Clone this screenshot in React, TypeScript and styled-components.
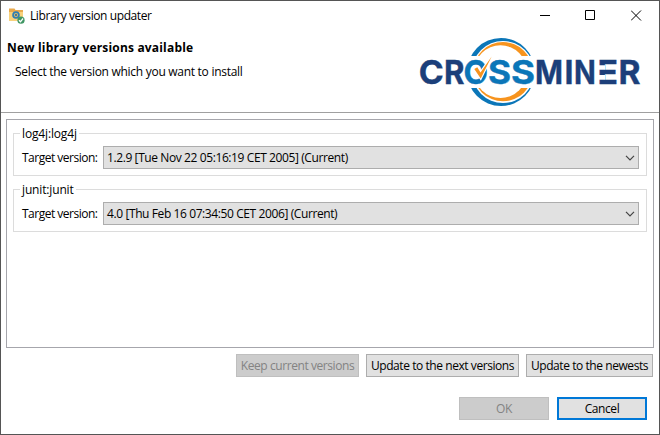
import React from "react";
import styled, { createGlobalStyle } from "styled-components";

const Global = createGlobalStyle`
  *{box-sizing:border-box}
  body{margin:0;background:#fff}
`;

const Window = styled.div`
  width: 660px;
  height: 435px;
  display: flex;
  flex-direction: column;
  border: 1px solid #555;
  background: #fff;
  color: #000;
  font: 12px/16px "Open Sans", "Noto Sans", sans-serif;
  letter-spacing: -0.3px;
  white-space: nowrap;
`;

const TitleBar = styled.div`
  height: 30px;
  display: flex;
  align-items: center;
  padding-left: 7px;
`;

const Title = styled.span`
  flex: 1;
  margin-left: 5px;
  letter-spacing: -0.41px;
`;

const WindowButton = styled.span`
  width: 45px;
  height: 30px;
  display: flex;
  align-items: center;
  justify-content: center;
`;

const Header = styled.header`
  height: 82px;
  display: flex;
  justify-content: space-between;
  border-bottom: 1px solid #a0a0a0;
`;

const Heading = styled.h1`
  margin: 9px 0 0 6px;
  font-size: 12px;
  line-height: 16px;
  font-weight: 700;
  letter-spacing: 0.18px;
`;

const Subtitle = styled.p`
  margin: 8px 0 0 14px;
  letter-spacing: -0.28px;
`;

const LogoArt = styled.svg`
  flex: none;
  margin-top: 3px;
`;

const Panel = styled.main`
  width: 648px;
  height: 229px;
  margin: 6px 0 0 5px;
  padding: 6px;
  border: 1px solid #a6a6ac;
`;

const Group = styled.fieldset`
  height: 50px;
  min-width: 0;
  margin: 0 0 6px;
  padding: 5px 7px 0 8px;
  border: 1px solid #dcdcdc;
`;

const Legend = styled.legend`
  margin-left: -2px;
  padding: 0 2px;
  height: 15px;
  letter-spacing: -0.15px;
`;

const Field = styled.div`
  display: flex;
`;

const Label = styled.label`
  width: 81px;
  line-height: 23px;
  letter-spacing: -0.5px;
`;

const Combo = styled.div`
  flex: 1;
  height: 23px;
  display: flex;
  align-items: center;
  justify-content: space-between;
  padding: 0 3px;
  border: 1px solid #adadad;
  background: #e1e1e1;
  letter-spacing: -0.4px;
`;

const Actions = styled.div`
  display: flex;
  justify-content: flex-end;
  gap: 7px;
  margin: 6px 6px 0 0;
`;

const DialogButtons = styled(Actions)`
  gap: 8px;
  margin: 20px 12px 0 0;
`;

const Button = styled.button<{ $width: number; $primary?: boolean }>`
  width: ${(p) => p.$width}px;
  height: 23px;
  padding: 0;
  font: inherit;
  letter-spacing: -0.43px;
  color: #000;
  background: #e1e1e1;
  border: ${(p) => (p.$primary ? "2px solid #0078d7" : "1px solid #adadad")};
  &:disabled {
    color: #838383;
    background: #ccc;
    border-color: #bfbfbf;
  }
`;

const AppIcon = () => (
  <svg width="17" height="17" viewBox="0 0 17 17">
    <path d="M1 .5h5.500l1 1.500H15v11H1z" fill="#e9a94c" />
    <path d="M1 4h14v9H1z" fill="#f8d27c" />
    <circle cx="8" cy="7" r="3.800" fill="#2f7fb5" />
    <circle cx="8" cy="7" r="2" fill="#d9c070" />
    <circle cx="8" cy="7" r="1" fill="#245f95" />
    <circle cx="13" cy="12.200" r="3.600" fill="#3f9663" />
    <path d="M11 12.200l1.500 1.600 2.500-3.300" fill="none" stroke="#fff" strokeWidth="1.300" />
  </svg>
);

const NAVY = "#1c3f7a";
const BLUE = "#0b76b8";
const ORANGE = "#f7941e";

const Glyph = ({ c, x, w, fill }: { c: string; x: number; w: number; fill: string }) => (
  <text
    x={x}
    y="84.4"
    textLength={w}
    lengthAdjust="spacingAndGlyphs"
    fill={fill}
    stroke={fill}
    strokeWidth="0.4"
    fontFamily="Inter"
    fontWeight="700"
    fontSize="33"
    letterSpacing="0"
  >
    {c}
  </text>
);

const Logo = () => (
  <LogoArt width="244" height="76" viewBox="415 34 244 76">
    <circle cx="501" cy="72" r="34" fill={BLUE} />
    <circle cx="503" cy="72" r="31" fill="#fff" />
    <circle cx="503" cy="71.7" r="29.6" fill={ORANGE} />
    <circle cx="500.5" cy="71.7" r="26.400" fill="#fff" />
    <path d="M460 56h80v32h-80z" fill="#fff" />
    <Glyph c="C" x={418.7} w={25} fill={NAVY} />
    <Glyph c="R" x={444} w={20.500} fill={NAVY} />
    <Glyph c="O" x={463.6} w={24.500} fill={BLUE} />
    <Glyph c="S" x={488} w={23} fill={BLUE} />
    <Glyph c="S" x={511} w={24} fill={BLUE} />
    <Glyph c="M" x={535} w={28} fill={NAVY} />
    <Glyph c="I" x={564.6} w={9} fill={NAVY} />
    <Glyph c="N" x={574} w={21.800} fill={NAVY} />
    <Glyph c="E" x={597.5} w={20.500} fill={NAVY} />
    <path d="M597.500 65.200h7.500v4.600h-7.500zM597.500 75h7.500v4.700h-7.500z" fill="#fff" />
    <Glyph c="R" x={618.500} w={22} fill={NAVY} />
    <path
      d="M474.300 69l3-1.800 3.200 5.300 11.200-16-11 22z"
      fill={ORANGE}
      stroke="#fff"
      strokeWidth="2.200"
      paintOrder="stroke"
    />
  </LogoArt>
);

const Chevron = () => (
  <svg width="10" height="6" viewBox="0 0 10 6" fill="none" stroke="#444" strokeWidth="1.2">
    <path d="M1 .8l4 4 4-4" />
  </svg>
);

const libraries = [
  { name: "log4j:log4j", version: "1.2.9 [Tue Nov 22 05:16:19 CET 2005] (Current)" },
  { name: "junit:junit", version: "4.0 [Thu Feb 16 07:34:50 CET 2006] (Current)" },
];

export default function App() {
  return (
    <Window>
      <Global />
      <TitleBar>
        <AppIcon />
        <Title>Library version updater</Title>
        <WindowButton><svg width="13" height="12"><path d="M0 5.5h10" stroke="#000" /></svg></WindowButton>
        <WindowButton><svg width="13" height="12"><path d="M.5.5h9v9h-9z" fill="none" stroke="#000" /></svg></WindowButton>
        <WindowButton><svg width="11" height="12"><path d="M0 .5l10 10m0-10l-10 10" stroke="#000" /></svg></WindowButton>
      </TitleBar>
      <Header>
        <div>
          <Heading>New library versions available</Heading>
          <Subtitle>Select the version which you want to install</Subtitle>
        </div>
        <Logo />
      </Header>
      <Panel>
        {libraries.map((l) => (
          <Group key={l.name}>
            <Legend>{l.name}</Legend>
            <Field>
              <Label>Target version:</Label>
              <Combo>{l.version}<Chevron /></Combo>
            </Field>
          </Group>
        ))}
      </Panel>
      <Actions>
        <Button $width={123} disabled>Keep current versions</Button>
        <Button $width={153}>Update to the next versions</Button>
        <Button $width={127}>Update to the newests</Button>
      </Actions>
      <DialogButtons>
        <Button $width={90} disabled>OK</Button>
        <Button $width={90} $primary>Cancel</Button>
      </DialogButtons>
    </Window>
  );
}
